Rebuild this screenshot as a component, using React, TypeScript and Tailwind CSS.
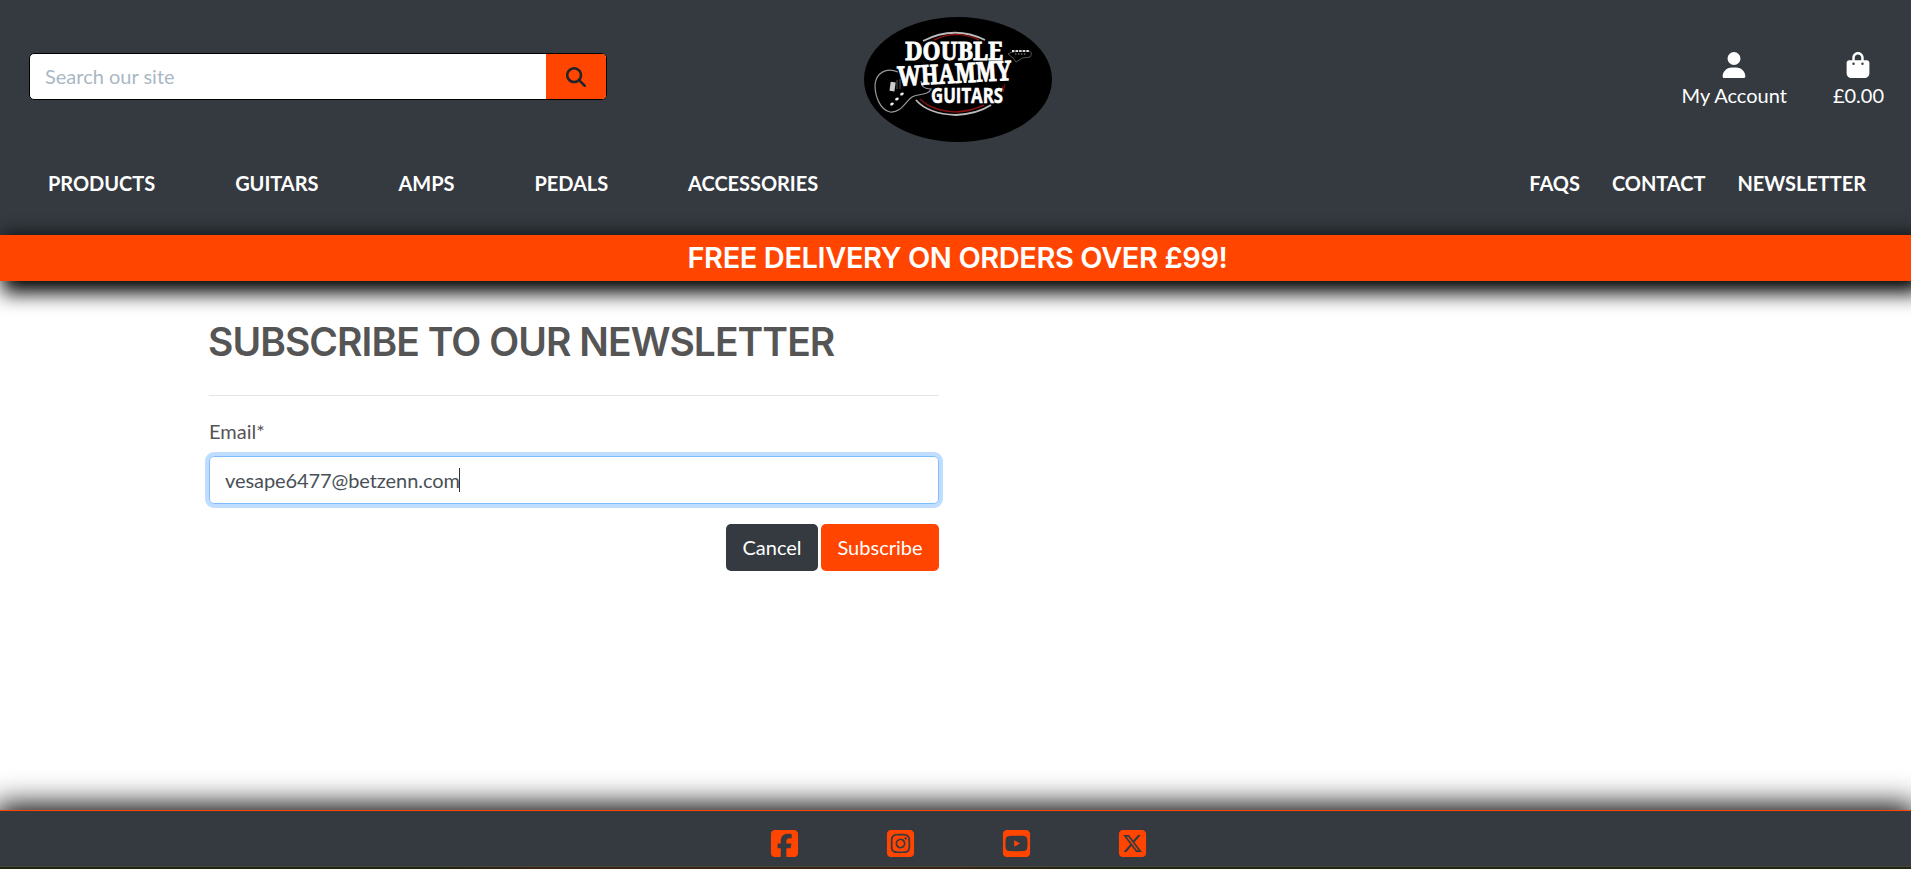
import React from "react";
import {
  FaUser,
  FaBagShopping,
  FaMagnifyingGlass,
  FaSquareFacebook,
  FaSquareInstagram,
  FaSquareYoutube,
  FaSquareXTwitter,
} from "react-icons/fa6";

const mainLinks = ["PRODUCTS", "GUITARS", "AMPS", "PEDALS", "ACCESSORIES"];
const sideLinks = ["FAQS", "CONTACT", "NEWSLETTER"];
const socials = [FaSquareFacebook, FaSquareInstagram, FaSquareYoutube, FaSquareXTwitter];

function Logo() {
  return (
    <svg width="188" height="125" viewBox="0 0 188 125" role="img" aria-label="Double Whammy Guitars">
      <ellipse cx="94" cy="62.5" rx="94" ry="62.5" fill="#000" />
      <g fill="none">
        <path d="M59 24Q90 8 121 23" stroke="#bbb" strokeWidth="1.8" />
        <path d="M70 23Q92 12 115 23" stroke="#8d1010" strokeWidth="1.4" />
        <path d="M52 83Q64 97 92 98Q113 97 127 88" stroke="#bbb" strokeWidth="1.8" />
        <path d="M56 82Q68 94 92 95Q108 94 120 88" stroke="#8d1010" strokeWidth="1.4" />
        <path d="M139 75l2-8M137 74l2-5" stroke="#8d1010" strokeWidth="1" />
        <path
          d="M34 55C22 50 12 56 11 68C11 79 16 93 26 95C37 96 41 85 48 80C55 76 64 79 67 72C61 72 57 70 57 64"
          stroke="#999"
          strokeWidth="1.2"
        />
        <path d="M144 37c5-3 12-3 21-3c3 1 3 3 1 6c-4 1-7 0-9 2l-5 3l-3-4z" stroke="#555" strokeWidth="1" />
        <path d="M148 34h17" stroke="#ddd" strokeWidth="2" strokeDasharray="2.4 1.2" />
        <path d="M151 37h12" stroke="#999" strokeWidth="1" strokeDasharray="1.5 1.5" />
        <path d="M33 63v9M36 62v10" stroke="#555" strokeWidth="1" />
      </g>
      <rect x="26" y="65" width="5" height="9" fill="#ccc" transform="rotate(8 28 70)" />
      <g fill="#eee">
        <ellipse cx="38" cy="77" rx="2" ry="1.3" transform="rotate(-30 38 77)" />
        <ellipse cx="33" cy="82" rx="2" ry="1.3" transform="rotate(-30 33 82)" />
        <ellipse cx="28" cy="87" rx="2" ry="1.3" transform="rotate(-30 28 87)" />
      </g>
      <g
        fill="#fff"
        stroke="#fff"
        strokeWidth=".9"
        fontFamily="'Noto Serif','DejaVu Serif Condensed','Liberation Serif',serif"
        fontWeight="700"
      >
        <text x="41" y="43" fontSize="26" textLength="98" lengthAdjust="spacingAndGlyphs">
          DOUBLE
        </text>
        <text x="34" y="66" fontSize="27" textLength="114" lengthAdjust="spacingAndGlyphs" transform="rotate(-3 90 66)">
          WHAMMY
        </text>
        <text
          x="67"
          y="86"
          fontSize="21"
          strokeWidth=".5"
          fontFamily="'Open Sans','Noto Sans',sans-serif"
          textLength="72"
          lengthAdjust="spacingAndGlyphs"
        >
          GUITARS
        </text>
      </g>
    </svg>
  );
}

export default function App() {
  return (
    <div className="flex h-[869px] w-full flex-col overflow-hidden bg-white font-['Lato','Open_Sans',sans-serif] text-[20px] leading-[30px] text-[#555]">
      <header className="flex h-[235px] shrink-0 flex-col bg-[#343a40] text-white">
        <div className="grid h-[158px] grid-cols-[1fr_188px_1fr] items-start pl-[29px] pr-[25px]">
          <form className="mt-[53px] flex h-[47px] w-[578px] overflow-hidden rounded-[5px] border border-black bg-white">
            <input
              className="min-w-0 flex-1 px-[15px] pb-[2px] outline-none placeholder:text-[#aab7c4]"
              placeholder="Search our site"
              aria-label="Search"
            />
            <button type="button" className="flex w-[60px] items-center justify-center bg-[#ff4500] text-[#212529]">
              <FaMagnifyingGlass size={20} />
            </button>
          </form>
          <div className="mt-[17px]">
            <Logo />
          </div>
          <div className="mr-[2px] mt-[52px] flex justify-end gap-[46px]">
            <a className="flex flex-col items-center">
              <FaUser size={26} />
              <span className="mt-[2px]">My Account</span>
            </a>
            <a className="flex flex-col items-center">
              <FaBagShopping size={26} />
              <span className="mt-[2px]">£0.00</span>
            </a>
          </div>
        </div>
        <nav className="flex h-[50px] items-center justify-between pl-[48px] pr-[45px] font-bold">
          <div className="flex gap-[80px] tracking-[-0.04px]">
            {mainLinks.map((l) => (
              <a key={l}>{l}</a>
            ))}
          </div>
          <div className="flex gap-[32px] tracking-[-0.04px]">
            {sideLinks.map((l) => (
              <a key={l}>{l}</a>
            ))}
          </div>
        </nav>
      </header>

      <div className="flex h-[46px] shrink-0 items-center justify-center bg-[#ff4500] pl-[4px] font-['Inter',sans-serif] text-[29px] font-semibold tracking-[-0.4px] text-white shadow-[7px_7px_20px_5px_#000]">
        <span className="whitespace-nowrap">FREE DELIVERY ON ORDERS OVER £99!</span>
      </div>

      <main className="flex-1 pl-[209px] pt-[37px]">
        <div className="w-[730px]">
          <h1 className="-ml-px whitespace-nowrap font-['Inter',sans-serif] text-[39px] font-semibold leading-[48px] tracking-[-0.95px]">
            SUBSCRIBE TO OUR NEWSLETTER
          </h1>
          <hr className="mt-[29px] border-[#e5e5e5]" />
          <label className="mt-[20px] block">Email*</label>
          <div className="mt-[10px] flex h-[48px] items-center rounded-[5px] border border-[#80bdff] px-[15px] text-[#495057] shadow-[0_0_0_4px_#bfdeff]">
            <span className="tracking-[-0.08px]">vesape6477@betzenn.com</span>
            <span className="-ml-px h-[24px] w-px bg-[#333]" />
          </div>
          <div className="mt-[20px] flex justify-end gap-[3px] text-white">
            <button className="h-[47px] w-[92px] rounded-[5px] bg-[#343a40] pb-[2px]">Cancel</button>
            <button className="h-[47px] w-[118px] rounded-[5px] bg-[#ff4500] pb-[2px]">Subscribe</button>
          </div>
        </div>
      </main>

      <footer className="flex h-[56px] shrink-0 justify-center gap-[85px] border-t border-[#ff4500] bg-[#343a40] pl-[5px] pt-[17px] text-[#ff4500] shadow-[0_0_30px_5px_#000]">
        {socials.map((Icon, i) => (
          <Icon key={i} size={31} />
        ))}
      </footer>
      <div className="h-[3px] shrink-0 border-t border-[#44483c] bg-[linear-gradient(90deg,#20240f_0%,#20240f_23%,#3a2414_28%,#3a2414_50%,#20260f_57%)]" />
    </div>
  );
}
